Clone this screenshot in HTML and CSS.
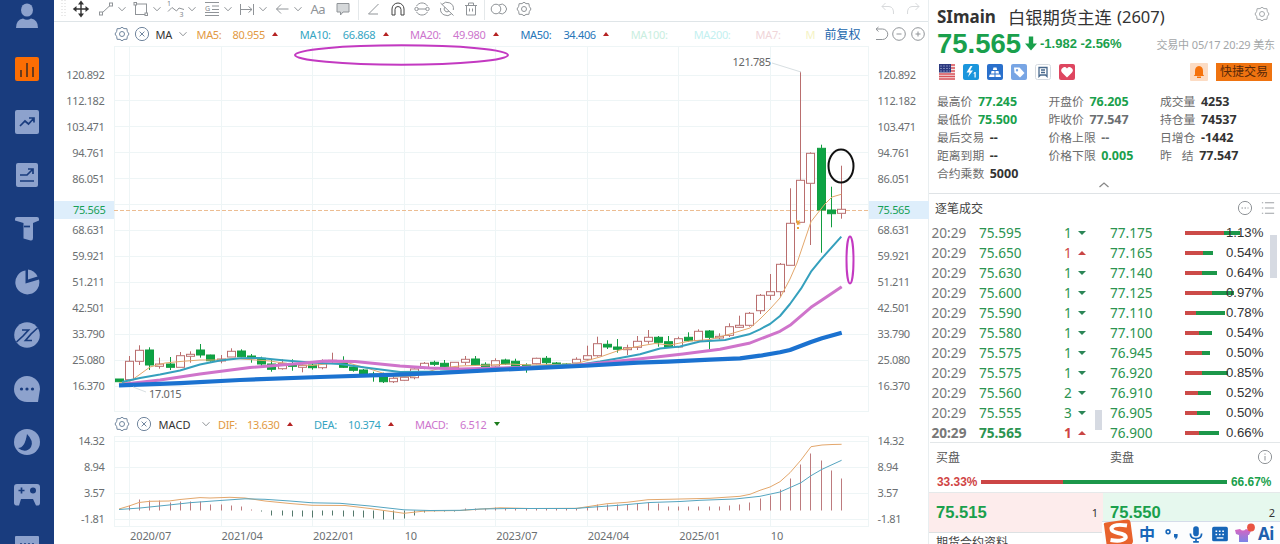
FILE: index.html
```html
<!DOCTYPE html>
<html lang="zh-CN">
<head>
  <meta charset="UTF-8">
  <title>SImain 白银期货主连</title>
  <link rel="stylesheet" href="styles.css">
</head>
<body>
  <svg class="defs" width="0" height="0">
    <symbol id="gear" viewBox="0 0 16 16"><path d="M8 1.2 L10 2.6 L12.9 2.7 L13.3 5.4 L15 8 L13.3 10.6 L12.9 13.3 L10 13.4 L8 14.8 L6 13.4 L3.1 13.3 L2.7 10.6 L1 8 L2.7 5.4 L3.1 2.7 L6 2.6 Z" stroke-linejoin="round"/><circle cx="8" cy="8" r="2.5"/></symbol>
    <symbol id="chev" viewBox="0 0 12 12"><path d="M2.5 4.2 L6 7.8 L9.5 4.2"/></symbol>
    <symbol id="closeX" viewBox="0 0 16 16"><circle cx="8" cy="8" r="6.6"/><path d="M5.6 5.6 L10.4 10.4 M10.4 5.6 L5.6 10.4"/></symbol>
  </svg>
  <div class="app">
    <nav class="sidebar">
      <svg viewBox="0 0 26 26"><ellipse cx="13" cy="7" rx="6" ry="6.6"/><path d="M2 25 Q2 16.5 9 15.5 Q13 18 17 15.5 Q24 16.5 24 25 Z"/></svg>
      <svg viewBox="0 0 26 26"><rect class="hot" x="1" y="1" width="24" height="24" rx="2"/><path class="cut" d="M7 21 V14 M13 21 V7 M19 21 V11"/></svg>
      <svg viewBox="0 0 26 26"><rect x="1" y="1" width="24" height="24" rx="2"/><path class="cut" d="M6 17 L11 12 L14.5 15 L20 9 M15 9 H20 V13.5"/></svg>
      <svg viewBox="0 0 26 26"><rect x="2" y="1" width="22" height="24" rx="2"/><path class="cut" d="M6 13 H13 L19 7 M14 7 H19 V12 M6 19 H20"/></svg>
      <svg viewBox="0 0 26 26"><path d="M3 1 H23 Q25 1 25 3 V4.5 L19 7 V22 Q19 25 16.5 24.5 L9.5 22.5 V7 L1 4.5 V3 Q1 1 3 1 Z"/><path class="cut" d="M10 10.5 H16"/></svg>
      <svg viewBox="0 0 26 26"><path d="M11.5 1.5 A12 12 0 1 0 25 10.5 L11.5 14.5 Z"/><path d="M14 0.5 A12 12 0 0 1 23.5 7.5 L14 10.5 Z"/></svg>
      <svg viewBox="0 0 26 26"><circle cx="13" cy="13" r="12.8"/><path class="cut" d="M2.5 20 L9 14 L14.5 8 H8 M23.5 6 L17 12 L11.500 18.500 H18"/></svg>
      <svg viewBox="0 0 26 26"><path d="M13 0 A13 13 0 0 1 26 13 L24 26 H13 A13 13 0 0 1 13 0 Z"/><g class="dot"><circle cx="7.5" cy="13" r="1.6"/><circle cx="13" cy="13" r="1.6"/><circle cx="18.5" cy="13" r="1.6"/></g></svg>
      <svg viewBox="0 0 26 26"><circle cx="13" cy="13" r="13"/><path class="dot" d="M13 5 Q20 12 17 18 Q12 25 4 19 Q11 19 13 5 Z"/></svg>
      <svg viewBox="0 0 26 26"><path d="M3 2 H23 Q26 2 26 5 V21 Q26 24 22 23.5 L19 17 H7 L5 23.5 Q0 24 0 21 V5 Q0 2 3 2 Z"/><path class="cut" d="M4.5 8.5 H10.5 M7.5 5.5 V11.5"/><circle class="dot" cx="19" cy="8.5" r="3"/></svg>
      <svg viewBox="0 0 26 26"><rect x="1" y="0" width="24" height="26" rx="1"/><path class="cut" d="M6 8 H20" stroke-dasharray="2 2"/></svg>
    </nav>

    <main class="chart-area">
      <div class="toolbar">
        <svg class="ic grip" viewBox="0 0 8 20"><path d="M2 1 V18 M5 1 V18" stroke-dasharray="1 2"/></svg>
        <svg class="ic move" viewBox="0 0 20 20"><path d="M10 3 V17 M3 10 H17"/><path class="solid" d="M10 1.5 L13 5.5 H7 Z M10 18.5 L7 14.5 H13 Z M1.8 10 L5.5 7 V13 Z M18.2 10 L14.5 7 V13 Z"/></svg>
        <div class="tool"><svg class="ic" viewBox="0 0 20 20"><path d="M6 14 L14 6.5"/><rect x="3.5" y="13" width="3" height="3"/><rect x="13.5" y="4" width="3" height="3"/></svg><svg class="ic chev"><use href="#chev"/></svg></div>
        <div class="tool"><svg class="ic" viewBox="0 0 20 20"><rect x="4.5" y="5" width="11" height="10.5"/><g class="white"><rect x="3" y="3.5" width="2.5" height="2.5"/><rect x="14" y="14" width="2.5" height="2.5"/></g></svg><svg class="ic chev"><use href="#chev"/></svg></div>
        <div class="tool"><svg class="ic" viewBox="0 0 20 20"><path d="M2 12.5 L6 8.5 L10.5 12 L13 9 L18 10.5"/><text x="1" y="7">1</text><text x="13.5" y="18">3</text></svg><svg class="ic chev"><use href="#chev"/></svg></div>
        <div class="tool"><svg class="ic" viewBox="0 0 20 20"><path d="M3 3.5 H17 M10 7 H17 M10 10.5 H17 M3 13.5 H17 M3 16.5 H17"/><text x="3" y="11.5">G</text></svg><svg class="ic chev"><use href="#chev"/></svg></div>
        <div class="tool"><svg class="ic" viewBox="0 0 20 20"><path d="M3.5 5 V16 M16.5 5 V16 M3.5 10.5 H15 M11.5 7.5 L15 10.5 L11.5 13.5"/></svg><svg class="ic chev"><use href="#chev"/></svg></div>
        <div class="tool"><svg class="ic" viewBox="0 0 20 20"><path d="M4.5 10 H16.5 M9 5.5 L4.5 10 L9 14.5"/></svg><svg class="ic chev"><use href="#chev"/></svg></div>
        <span class="aa">Aa</span>
        <svg class="ic note" viewBox="0 0 20 20"><path class="fill" d="M4 4.5 H16 V13 H10 L7.5 16 V13 H4 Z"/></svg>
        <i class="sep"></i>
        <svg class="ic single" viewBox="0 0 20 20"><path d="M15.5 5 L5.5 15 H15"/></svg>
        <svg class="ic single dark" viewBox="0 0 20 20"><path d="M4 16 V10 A6 6 0 0 1 16 10 V16 H13 V10.5 A3 3 0 0 0 7 10.5 V16 Z"/></svg>
        <svg class="ic single" viewBox="0 0 20 20"><path d="M4.5 7 A6.5 6.5 0 0 1 15.5 7 M4.5 13 A6.5 6.5 0 0 0 15.5 13 M6 10 H14"/><circle cx="4.5" cy="10" r="1.7"/><circle cx="15.5" cy="10" r="1.7"/></svg>
        <svg class="ic single" viewBox="0 0 20 20"><path d="M5 5.5 A6.5 6.5 0 0 1 16.3 11 M14.5 14.8 A6.5 6.5 0 0 1 3.6 9 M3.5 4 L16.5 16.5 M8 8 A2.8 2.8 0 0 0 12 12"/></svg>
        <svg class="ic single" viewBox="0 0 20 20"><path d="M4 6.5 H16 M7.5 6.5 V4 H12.5 V6.5 M5.5 6.5 V16 H14.5 V6.5 M8.5 9.5 V12.5 M11.5 9.5 V12.5"/></svg>
        <i class="sep"></i>
        <svg class="ic single" viewBox="0 0 20 20"><circle cx="7" cy="10" r="4.8"/><path d="M10 6 A4.8 4.8 0 1 1 10 14"/></svg>
        <svg class="ic gear"><use href="#gear"/></svg>
        <span class="push"></span>
        <svg class="ic faint" viewBox="0 0 20 20"><path d="M7.5 4 L4 7.5 L7.5 11 M4 7.5 H11 Q16 8 15.5 15"/></svg>
        <svg class="ic faint" viewBox="0 0 20 20"><path d="M12.5 4 L16 7.5 L12.5 11 M16 7.5 H9 Q4 8 4.5 15"/></svg>
      </div>

      <div class="indicators ma-row">
        <svg class="ic g16"><use href="#gear"/></svg>
        <svg class="ic g16"><use href="#closeX"/></svg>
        <span class="ind-name">MA</span>
        <svg class="ic chev"><use href="#chev"/></svg>
        <div class="ma-item ma5 first"><span>MA5:</span><b>80.955</b><i class="up"></i></div>
        <div class="ma-item ma10"><span>MA10:</span><b>66.868</b><i class="up"></i></div>
        <div class="ma-item ma20"><span>MA20:</span><b>49.980</b><i class="up"></i></div>
        <div class="ma-item ma50"><span>MA50:</span><b>34.406</b><i class="up"></i></div>
        <span class="off100">MA100:</span><span class="off200">MA200:</span><span class="off7">MA7:</span><span class="offx">M</span>
        <span class="adj">前复权</span>
        <svg class="ic zoomer" viewBox="0 0 16 16"><path d="M3 3 H9.5 A5 5 0 0 1 9.5 13.5 H3 M5.5 1 L3 3.2 L5.5 5.5"/></svg>
        <svg class="ic zoomer" viewBox="0 0 16 16"><circle cx="8" cy="8" r="6.3"/><path d="M5.5 8 H10.5"/></svg>
        <svg class="ic zoomer" viewBox="0 0 16 16"><circle cx="8" cy="8" r="6.3"/><path d="M5.5 8 H10.5 M8 5.5 V10.5"/></svg>
      </div>

      <div class="plot price">
        <div class="axis left"></div>
        <svg id="priceChart" viewBox="114 46 755 366"></svg>
        <div class="axis right"></div>
        <div class="tag tag-left">75.565</div>
        <div class="tag tag-right">75.565</div>
      </div>

      <div class="indicators macd-row">
        <svg class="ic g16"><use href="#gear"/></svg>
        <svg class="ic g16"><use href="#closeX"/></svg>
        <span class="ind-name">MACD</span>
        <svg class="ic chev"><use href="#chev"/></svg>
        <div class="macd-item ma5"><span>DIF:</span><b>13.630</b><i class="up"></i></div>
        <div class="macd-item ma10 dea"><span>DEA:</span><b>10.374</b><i class="up"></i></div>
        <div class="macd-item ma20 hist"><span>MACD:</span><b>6.512</b><i class="down"></i></div>
      </div>

      <div class="plot macd">
        <div class="axis left"><span>14.32</span><span>8.94</span><span>3.57</span><span>-1.81</span></div>
        <svg id="macdChart" viewBox="114 436 755 91"></svg>
        <div class="axis right"><span>14.32</span><span>8.94</span><span>3.57</span><span>-1.81</span></div>
      </div>
      <div class="dates"><span>2020/07</span><span>2021/04</span><span>2022/01</span><span>10</span><span>2023/07</span><span>2024/04</span><span>2025/01</span><span>10</span></div>
    </main>

    <aside class="quote">
      <div class="title"><b>SImain</b><span class="name">白银期货主连</span><span class="code">(2607)</span><svg class="ic g16"><use href="#gear"/></svg></div>
      <div class="last">
        <strong>75.565</strong>
        <svg class="drop" viewBox="0 0 12 16"><path d="M3.8 1 H8.2 V8 H12 L6 15 L0 8 H3.8 Z"/></svg>
        <span class="chg">-1.982 -2.56%</span>
        <span class="time">交易中 05/17 20:29 美东</span>
      </div>
      <div class="badges">
        <svg viewBox="0 0 16 16"><rect width="16" height="16" rx="2" fill="#f4e4e4"/><path d="M8 1 H16 M8 4 H16 M8 7 H16 M0 10 H16 M0 12.5 H16 M0 15 H16" stroke="#d9525a" stroke-width="1.4"/><rect width="12" height="8.500" fill="#2c3a80"/><path d="M1.5 2 H11 M1.5 4.5 H11 M1.5 7 H11" stroke="#ccd3ee" stroke-dasharray="1 2"/></svg>
        <svg viewBox="0 0 16 16"><rect width="16" height="16" rx="2" fill="#1b96dc"/><path d="M7.5 2 L3.5 8.5 H6.5 L5 13 L10 6.5 H7 L9.5 2 Z M11.5 8 H12.7 V13.5 H11.5 V9.5 L10.3 10 Z" fill="#fff"/></svg>
        <svg viewBox="0 0 16 16"><rect width="16" height="16" rx="2" fill="#2a70cc"/><path d="M6.5 3.5 H9.5 L10.2 6 H5.8 Z M4.5 7 H7.5 V9.5 H4 Z M8.5 7 H11.5 L12 9.5 H8.5 Z M2.8 10.5 H7.5 V13 H2 Z M8.5 10.5 H13.2 L14 13 H8.5 Z" fill="#fff"/></svg>
        <svg viewBox="0 0 16 16"><rect width="16" height="16" rx="2" fill="#78a5e4"/><path d="M3 3.5 L8.5 3.5 L13.5 9 L9 13.5 L3.5 8.5 Z" fill="#fff"/><circle cx="6" cy="6.3" r="1.2" fill="#78a5e4"/></svg>
        <svg viewBox="0 0 16 16"><rect x=".5" y=".5" width="15" height="15" rx="2" fill="#fff" stroke="#d5dae0"/><path d="M4 3.5 H12 V12.5 L10.5 11 H5.500 L4 12.5 Z M6 6 H10 M6 8.5 H10" fill="none" stroke="#48688c" stroke-width="1.3"/></svg>
        <svg viewBox="0 0 16 16"><rect width="16" height="16" rx="2" fill="#de4660"/><path d="M8 13.5 L3 8.5 A3 3 0 0 1 8 4.5 A3 3 0 0 1 13 8.5 Z" fill="#fff"/></svg>
        <svg class="bell" viewBox="0 0 18 18"><rect width="18" height="18" rx="1" fill="#fcdcc4"/><path d="M9 3 Q13 3.5 13 8 V11.5 L14.2 13 H3.8 L5 11.5 V8 Q5 3.5 9 3 Z M7 13.5 H11 V15 H7 Z" fill="#f5720c"/></svg>
        <span class="fast">快捷交易</span>
      </div>
      <div class="stats">
        <div><p>最高价<b class="grn">77.245</b></p><p>最低价<b class="grn">75.500</b></p><p>最后交易<b>--</b></p><p>距离到期<b>--</b></p><p>合约乘数<b>5000</b></p></div>
        <div><p>开盘价<b class="grn">76.205</b></p><p>昨收价<b class="gry">77.547</b></p><p>价格上限<b class="gry">--</b></p><p>价格下限<b class="grn">0.005</b></p></div>
        <div><p>成交量<b>4253</b></p><p>持仓量<b>74537</b></p><p>日增仓<b>-1442</b></p><p><span class="wide">昨</span>结<b>77.547</b></p></div>
      </div>
      <div class="fold"><svg viewBox="0 0 12 8"><path d="M1.5 6 L6 2 L10.5 6"/></svg></div>
      <div class="tick-head">逐笔成交
        <svg class="ic more" viewBox="0 0 16 16"><circle cx="8" cy="8" r="6.6"/><path d="M4.5 8 H11.5" stroke-dasharray="1.5 1.5"/></svg>
        <svg class="ic list" viewBox="0 0 16 16"><path d="M1 2 H2.5 M4.5 2 H15 M1 8 H2.5 M4.5 8 H15 M1 14 H2.5 M4.5 14 H15"/></svg>
      </div>
      <div class="ticks">
        <div id="trades"></div>
        <div id="levels"></div>
        <i class="thumb thumb-a"></i><i class="thumb thumb-b"></i>
      </div>
      <div class="sides"><span>买盘</span><span>卖盘</span><svg class="ic info" viewBox="0 0 16 16"><circle cx="8" cy="8" r="6.6"/><path d="M8 7 V11.5 M8 4.5 V5.7"/></svg></div>
      <div class="ratio"><b class="red">33.33%</b><i class="buy"></i><i class="sell"></i><b class="grn">66.67%</b></div>
      <div class="book"><div class="bid"><b>75.515</b><span>1</span></div><div class="ask"><b>75.550</b><span>2</span></div></div>
      <div class="next">期货合约资料</div>
    </aside>

    <div class="ime">
      <svg class="logo" viewBox="0 0 32 28"><path d="M2 6 Q1 4 4 3.5 L25 0.5 Q28 0 28.5 3 L31 22 Q31 25 28 26 L12 28 H7 Q5 28 4.5 25 Z" fill="#e8622c"/><path d="M25 6.500 Q12 4.500 9.5 9 Q9 12.500 16 14 Q25 15.500 23.500 19 Q20 23 8.500 21" fill="none" stroke="#fff" stroke-width="4"/></svg>
      <span class="zh">中</span>
      <svg viewBox="0 0 16 16"><circle cx="4.5" cy="6" r="1.7" fill="none" stroke="#1766b8" stroke-width="1.4"/><path d="M9.8 8 H13 Q13.5 12 10.5 13 Q11.5 11.5 11 11 H9.8 Z" fill="#1766b8"/></svg>
      <svg viewBox="0 0 16 16"><rect x="5.5" y="1" width="5" height="9" rx="2.5" fill="#1766b8"/><path d="M3 7.5 Q3 12 8 12 Q13 12 13 7.5 M8 12 V15 M5.5 15 H10.5" fill="none" stroke="#1766b8" stroke-width="1.5"/></svg>
      <svg viewBox="0 0 16 16"><rect x="1" y="1.5" width="14" height="13" rx="1.5" fill="#1766b8"/><path d="M4 5.5 H12.5 M4 8.5 H12.5" stroke="#fff" stroke-width="1.3" stroke-dasharray="1.5 1.5"/><path d="M5 11.5 H11" stroke="#fff" stroke-width="1.2"/></svg>
      <svg class="skin" viewBox="0 0 20 20"><defs><linearGradient id="skinFill" x2="0" y2="1"><stop offset="0" stop-color="#d964c0"/><stop offset="1" stop-color="#7b83e8"/></linearGradient></defs><path d="M5 6 Q8 9 11 6 L16 8 L14 12 H13 V19 H4 V12 L1 11 L0 7 Z" fill="url(#skinFill)"/><circle cx="16" cy="4.5" r="3.9" fill="#e95443"/></svg>
      <b class="ai">Ai</b>
    </div>
  </div>
  <script src="chart.js"></script>
</body>
</html>
```

FILE: styles.css
```css
* { box-sizing: border-box; }
body {
  margin: 0;
  width: 1280px;
  height: 544px;
  overflow: hidden;
  background: #fff;
  font-family: "Noto Sans", "Noto Sans CJK SC", sans-serif;
  font-size: 11px;
  color: #444;
}
.defs { position: absolute; }
.app { position: relative; display: flex; height: 544px; overflow: hidden; }
svg { flex-shrink: 0; display: block; }
p { margin: 0; }
i { font-style: normal; }
.ic { fill: none; stroke: #909498; stroke-width: 1; }
.chev { width: 12px; height: 12px; }

/* sidebar */
.sidebar {
  width: 54px;
  flex-shrink: 0;
  background: #193c7e;
  display: flex;
  flex-direction: column;
  align-items: center;
  gap: 27.3px;
  padding-top: 2.6px;
  overflow: hidden;
}
.sidebar svg { width: 26px; height: 26px; fill: #8da2cd; }
.sidebar .hot { fill: #fb6d03; }
.sidebar .cut { fill: none; stroke: #193c7e; stroke-width: 1.7; }
.sidebar .hot + .cut { stroke: #54341f; }
.sidebar .dot { fill: #193c7e; }

/* chart side */
.chart-area { width: 875px; flex-shrink: 0; display: flex; flex-direction: column; border-right: 1px solid #e9eef0; }
.toolbar {
  height: 22px;
  flex-shrink: 0;
  display: flex;
  align-items: center;
  padding-bottom: 4px;
  border-bottom: 1px solid #dfe5e8;
}
.toolbar > .ic, .toolbar .tool .ic:first-child { width: 20px; height: 20px; }
.toolbar text { font-size: 7px; fill: #808488; stroke: none; }
.toolbar .grip { width: 8px; margin: 0 3px 0 6px; stroke: #d5d5d5; }
.toolbar .move { stroke: #333; stroke-width: 1.4; margin-right: 4.5px; }
.toolbar .solid { fill: #333; stroke: none; }
.toolbar .white { fill: #fff; }
.toolbar .fill { fill: #d5d8da; }
.toolbar .dark { stroke: #444; }
.tool { display: flex; align-items: center; width: 35.4px; }
.aa { width: 20px; text-align: center; font-size: 13px; color: #909498; letter-spacing: -0.5px; }
.toolbar .note { margin: 0 5px; }
.sep { width: 1px; height: 22px; background: #e4e8ea; }
.toolbar .single { margin: 0 2.25px; }
.toolbar .sep + .single { margin-left: 4.5px; }
.toolbar .gear { width: 16px; height: 16px; margin-left: 5px; }
.push { flex: 1; }
.toolbar .faint { stroke: #d8dadc; margin-right: 5px; }

.indicators { display: flex; align-items: center; letter-spacing: -0.33px; white-space: nowrap; }
.indicators b { font-weight: normal; }
.g16 { width: 16px; height: 16px; stroke: #71869e; }
.ma-row { height: 24px; padding-left: 59.5px; }
.ma-row .g16 + .g16 { margin-left: 4px; }
.ma-row .ind-name { margin-left: 6px; width: 22px; color: #333; }
.ma-row .chev { margin-left: -0.5px; }
.up, .down { border: 3px solid transparent; border-top: 0; border-bottom: 4px solid #b52222; width: 0; }
.down { border-bottom: 0; border-top: 4px solid #1c7c1c; }
.ma-item { display: flex; align-items: center; width: 110.3px; flex-shrink: 0; }
.ma-item span { width: 43px; }
.ma-item b { width: 40px; }
.ma-item.first { width: 103.3px; margin-left: 7.5px; }
.ma-item.first span { width: 36px; }
.ma5 { color: #e29a43; }
.ma10 { color: #35a5c2; }
.ma20 { color: #cd75cd; }
.ma50 { color: #2776b9; }
.off100 { width: 63px; color: #c9eee0; }
.off200 { width: 62px; color: #c3f0f0; }
.off7 { width: 50px; color: #f0d5d9; }
.offx { width: 19px; color: #f5f3c4; }
.adj { width: 48px; font-size: 12px; color: #2267ad; letter-spacing: 0; }
.zoomer { width: 16px; height: 16px; margin-right: 2.5px; }

.plot { position: relative; display: flex; flex-shrink: 0; }
.plot.price { height: 366px; }
.plot > svg { width: 755px; height: 100%; overflow: visible; }
.axis { display: flex; flex-direction: column; width: 60px; letter-spacing: -0.35px; color: #6b6f72; }
.axis.left { text-align: right; padding-right: 9px; }
.axis.right { padding-left: 9px; }
.price .axis { padding-top: 16px; }
.price .axis span { height: 25.92px; line-height: 26px; flex-shrink: 0; }
.tag {
  position: absolute;
  top: 155px;
  width: 60px;
  height: 18px;
  line-height: 18px;
  background: #deeefb;
  color: #18a058;
  letter-spacing: -0.3px;
}
.tag-left { left: 0; text-align: right; padding-right: 8.5px; }
.tag-right { left: 815px; padding-left: 8.5px; }

.macd-row { height: 24px; padding-left: 59.5px; }
.macd-row .g16 + .g16 { margin-left: 6px; }
.macd-row .ind-name { margin-left: 7px; width: 41px; color: #333; letter-spacing: 0.1px; }
.macd-item { display: flex; align-items: center; width: 96px; margin-left: 6.5px; }
.macd-item span { width: 29px; }
.macd-item b { width: 39.5px; }
.macd-item.dea { margin-left: 0; width: 101px; }
.macd-item.dea span { width: 34px; }
.macd-item.dea b { width: 40px; }
.macd-item.hist { margin-left: 0; }
.macd-item.hist span { width: 45px; }
.macd-item.hist b { width: 33.5px; }
.plot.macd { height: 91px; }
.macd .axis { margin-top: -8px; }
.macd .axis span { height: 26px; line-height: 26px; flex-shrink: 0; }
.dates { display: flex; padding-left: 76px; height: 17px; line-height: 18px; color: #6b6f72; letter-spacing: -0.1px; }
.dates span { width: 91.55px; flex-shrink: 0; }

/* chart drawing */
.grid { stroke: #eef5f6; stroke-width: 1; fill: none; }
.now { stroke: #ecbd92; stroke-dasharray: 4 2; }
.up-c { stroke: #b96e6e; fill: #fff; }
.dn-c { stroke: #129c40; fill: #0da344; }
.line5 { stroke: #e3a76c; stroke-width: 1; }
.line10 { stroke: #35a0bd; stroke-width: 2; }
.line20 { stroke: #cf74cb; stroke-width: 3; }
.line50 { stroke: #1b72d0; stroke-width: 4.2; }
.dea-line { stroke: #55a5c0; stroke-width: 1; }
.line5, .line10, .line20, .line50, .dea-line { fill: none; stroke-linejoin: round; }
.bar-up { stroke: #bd7b7e; }
.bar-dn { stroke: #54796c; }
.mark { font-size: 11px; fill: #666; letter-spacing: -0.35px; }
.leader { stroke: #d8dfe2; }
.ring { fill: none; stroke: #c339c1; stroke-width: 2; }
.ring.black { stroke: #111; }
.spark { fill: #e9a33c; }

/* quote side */
.quote { width: 351px; flex-shrink: 0; padding-left: 1px; }
.grn { color: #1aa04c !important; }
.red { color: #d04444; }
.gry { color: #6b6f72 !important; }
.title { display: flex; align-items: center; height: 30px; padding: 3px 10px 0 7px; color: #333; }
.title b { font-size: 17px; width: 71px; }
.title .name { font-size: 17.3px; width: 109px; white-space: nowrap; }
.title .code { font-size: 16.5px; }
.title .g16 { margin-left: auto; margin-top: -5px; stroke: #a5a9ac; }
.last { display: flex; align-items: center; height: 27px; padding: 0 5px 0 7px; color: #1aa04c; }
.last strong { font: bold 27.5px/27px "Liberation Sans", sans-serif; width: 88px; }
.drop { width: 12px; height: 17px; fill: #1aa04c; margin: 0 3px 0 0; }
.chg { font: bold 13px "Liberation Sans", sans-serif; white-space: nowrap; }
.time { margin-left: auto; color: #a3a6a8; white-space: nowrap; letter-spacing: -0.13px; }
.badges { display: flex; align-items: center; gap: 8px; height: 30px; padding: 0 8px 0 9px; }
.badges svg { width: 16px; height: 16px; }
.badges .bell { width: 18px; height: 18px; margin-left: auto; }
.fast { width: 56px; height: 18px; line-height: 17px; background: #ef7310; color: #5b2a08; font-size: 12px; text-align: center; }
.stats { display: flex; padding: 5px 0 0 7px; height: 94px; color: #6c6c6c; font-size: 11.8px; }
.stats > div { width: 111.5px; flex-shrink: 0; }
.stats p { height: 18px; line-height: 18px; white-space: nowrap; }
.stats b { margin-left: 5.5px; font-size: 12.5px; color: #333; }
.stats .wide { margin-right: 10px; }
.fold { height: 13px; margin-left: -1px; border-bottom: 1px solid #dfe3e6; }
.fold svg { width: 12px; height: 8px; margin-left: 169px; fill: none; stroke: #888; stroke-width: 1.3; }
.tick-head { display: flex; align-items: center; height: 28px; padding: 0 4px 0 5px; color: #444; font-size: 12px; }
.tick-head .more { width: 16px; height: 16px; margin-left: auto; }
.tick-head .list { width: 16px; height: 14px; margin-left: 7px; }
.ticks { position: relative; display: flex; height: 221px; border-bottom: 1px solid #e3e7e9; padding-top: 0.5px; }
#trades { width: 174px; }
#levels { flex: 1; }
.trade, .level { display: flex; align-items: center; height: 20px; font-size: 13.6px; line-height: 20px; color: #2b9450; }
.trade .at { width: 49px; padding-left: 1.5px; color: #777; }
.trade .px { width: 85px; }
.trade .qty { width: 14px; }
.trade.last-row { font-weight: bold; }
.trade .up { border-width: 0 4px 4px; border-color: transparent transparent #c94444; }
.trade .down { border-width: 4px 4px 0; border-color: #2b8656 transparent transparent; }
.trade .up-qty { color: #d04444; }
.level .px { width: 81px; padding-left: 6px; }
.level .bars { width: 41px; height: 4px; display: flex; }
.bars i { height: 4px; flex-shrink: 0; }
.bars .r { background: #cc4b48; }
.bars .g { background: #1c974a; }
.level .pct { font: 13.2px "Liberation Sans", sans-serif; color: #333; position: relative; }
.thumb { position: absolute; background: #d6dae2; }
.thumb-a { left: 165px; top: 188px; width: 7px; height: 20px; }
.thumb-b { left: 340px; top: 13px; width: 7px; height: 43px; }
.sides { display: flex; align-items: center; height: 28px; padding: 0 7px 0 6px; font-size: 12px; color: #555; }
.sides span { width: 174px; }
.sides span + span { width: 60px; }
.sides .info { width: 16px; height: 16px; margin-left: auto; }
.ratio { display: flex; align-items: center; height: 21px; padding-left: 7px; font: bold 11.9px "Liberation Sans", sans-serif; }
.ratio b { width: 44px; }
.ratio i { height: 4px; }
.ratio .buy { width: 82px; background: #cc4545; }
.ratio .sell { width: 164px; background: #1c974a; margin-right: 4px; }
.book { display: flex; height: 41px; margin-left: -1px; border-top: 1px solid #e5e9ea; border-bottom: 1px solid #dde1e3; }
.book > div { display: flex; align-items: center; justify-content: space-between; padding: 0 5px 0 7px; font-size: 11px; color: #333; }
.book b { font: bold 16.6px "Liberation Sans", sans-serif; color: #1aa04c; }
.bid { width: 174px; background: #fdecec; }
.ask { width: 177px; background: #e6f8ee; }
.next { padding-left: 6px; font-size: 12px; line-height: 20px; }

/* floating input method bar */
.ime {
  position: absolute;
  left: 1102px;
  top: 521px;
  width: 178px;
  height: 26px;
  display: flex;
  align-items: center;
  background: #fcfdfe;
  border-top: 1px solid #d5dcea;
}
.ime svg { width: 18px; height: 18px; margin: -2px 6px 0 0; }
.ime .logo { width: 32px; height: 28px; margin: -4px 5px 0 0; }
.ime .zh { font-size: 16px; font-weight: bold; line-height: 24px; margin-top: -2px; color: #1766b8; width: 24px; }
.ime .skin { width: 20px; height: 20px; margin: -4px 3px 0 0; }
.ime .ai { font-size: 17px; line-height: 24px; margin-top: -2px; color: #1d5fae; letter-spacing: -0.5px; }
```

FILE: chart.js
```js
const STEP = 10.17;
const X0 = 119.3;

// type, high, body top, body bottom, low
const candles = [
  ['g',379,379,381.7,381.7],['r',356,361.3,379.7,379.7],['r',345.3,350.3,361.3,365],['g',347.3,350,365,370],
  ['r',357.7,364,366.3,368.7],['g',357,364,367.3,370],['r',352,355.7,367.3,367.3],['r',351.3,354.3,356.3,362.7],
  ['g',344,350,355,357.7],['g',354.7,355,360.7,361.7],['r',355,359,361,363.3],['r',348.3,351.3,357,357],
  ['g',349.3,351,356.7,357.3],['g',354,356,357.3,362.7],['g',356.7,358.3,364,366.3],['g',359.3,364,369.3,371.7],
  ['r',359.3,363.3,368.7,369.7],['g',359.3,364.7,366.3,370.7],['r',363.3,365.3,367.3,372.3],['g',363.3,365,367.7,369.7],
  ['r',359.3,363.7,367.7,369.3],['r',352.7,360.3,361.3,363.3],['g',356.3,360.7,367.3,368],['g',364.7,367,370.3,371.7],
  ['g',369,370,374,374.7],['g',371.7,374,375.3,381.7],['g',372.7,376.7,381.7,383],['r',376,378.3,381.7,383],
  ['r',375.3,377.3,380.3,381],['r',368.3,369,377.7,379.3],['r',362,363.3,368.3,369.3],['g',360.7,362.3,364.3,366],
  ['g',360,363.3,366.7,368.3],['r',362,362.3,367.7,368.7],['r',356,359.3,362.3,365],['g',356,359,364.7,365.7],
  ['g',362.3,364.3,366.7,367.7],['r',358.3,360.7,366,366.7],['g',358.7,360,364,365],['g',358.7,361.3,366.7,368.3],
  ['g',363.3,365,367.3,372.7],['r',357.7,358.3,363.7,364.3],['g',356,358.3,362.7,366],['g',362,363,364.3,366],
  ['g',363.3,364,365.3,366.7],['r',357.3,359.3,363,363.3],['r',345.7,355.7,359.3,360],['r',336.7,343.7,355.7,356.7],
  ['g',340.3,344.3,347,349],['g',339,347,349.3,352.7],['r',344.7,347.7,349.7,355],['r',336,341.3,347.3,350],
  ['r',330,337.3,341.3,343.7],['g',336,337.3,342.3,346.7],['g',336,341.7,347,347.7],['r',336.7,338.7,347,348],
  ['g',332.3,337.3,340.7,341.7],['r',329.3,331.3,340.7,340.7],['g',330,331,337.3,349.3],['r',333.3,336.3,338,339.3],
  ['r',323.3,326.7,335.3,337],['r',315.7,325.3,327.3,328],['r',312,313.3,325.3,326.7],['r',294,295.3,310.7,314],
  ['r',274,291.7,295.3,300],['r',263,264.3,291.7,296.7],['r',188.3,223.3,265.3,265.3],['r',71.7,180.3,222.3,222.3],
  ['r',152.3,153.3,183.3,245],['g',144.7,148.3,210,252.7],['g',186.7,210,213.7,227.3],['r',165.7,209.3,213.3,218.7]
];

const lines = {
  line5: '119,383 129,382 139,375 150,367 165,363 180,361.5 200,360 215,360 235,358.5 270,361 290,364 312,365.5 345,362 370,369 395,377 415,376 440,368 460,366 490,365 510,364 530,365 575,364 600,357 620,350 640,346 655,343.5 670,345 690,341 710,339.5 730,334 750,328 760,319 770,309 780,298 790,279 797,263 811,221.7 817,214 825,204 832,197 841.3,194.3',
  line10: '122,382 140,378 160,374.5 180,370.5 200,364.5 220,360.5 240,358.3 260,358 280,360 310,362.5 340,364 365,367.5 400,372 440,371.5 480,370 510,367.5 580,364.5 600,361.5 620,358 640,354.3 660,348.5 680,346.5 700,341.5 725,340 749,334.3 760,329.3 770,324 780,316 790,304 801,288.7 811,271.7 821,259.3 841.3,236.7',
  line20: '125,384 160,380 200,374 250,367.5 300,363.5 325,361 355,361.5 380,364 400,366 430,368 460,369 500,368 560,367 600,363 643,358.5 683,354 720,349.3 749,343.3 780,331.3 790,325.3 811,307.3 822,300 841.7,286.7',
  line50: '119,385.3 180,383.2 240,380 320,377 404,374.3 440,373 500,369.7 590,365.5 638,362.7 668,361.7 710,359.7 740,358.3 760,355.7 780,352.3 790,350 811,342 822,338.3 841.7,332.7'
};

const hist = [0,5,11,10,10,8,9,9,9,6,6,5,4,1,-1,-5,-5,-6,-6,-7,-5,-5,-6,-6,-7,-8,-9,-9,-8,-5,-2,-1,-1,-1,2,2,2,3,2,2,2,2,2,2,2,2,4,6,6,6,6,7,8,7,4,4,4,4,4,4,5,6,8,12,15,21,32,46,57,50,40,32];
const dif = '119,509 129,506 139,502.5 150,501.3 169,501 180,499.5 200,497.6 210,498 230,497.3 245,498 265,501 290,503.5 312,505.3 345,505.5 370,508.5 404,513.3 425,511 460,510.5 500,507.8 530,508.5 577,508.3 607,503.7 627,502.3 648,499.7 668,499.3 710,498.3 740,496.3 750,494.3 760,490.3 770,487 780,481.7 790,472.7 801,460 811,446.7 822,445 832,444.5 841.6,444.3';
const dea = '119,509.5 140,508 169,505 190,502.7 220,500.5 245,498.8 265,499.3 290,501 312,502.8 340,503.3 370,506 404,509.8 430,510.5 460,510.3 480,509 510,508.5 575,508.5 590,507.3 620,505.2 650,502.5 680,501.5 700,500.3 735,499 760,496.3 780,492 801,482.7 811,475.7 822,469.3 832,464.7 841.6,460.3';

const labels = ['120.892','112.182','103.471','94.761','86.051','77.341','68.631','59.921','51.211','42.501','33.790','25.080','16.370'];

function xAt(i) { return X0 + i * STEP; }

function gridLines(top, bottom, ys) {
  let s = `<rect class="grid" x="114.5" y="${top}" width="754" height="${bottom - top}"/>`;
  ys.forEach(y => { s += `<path class="grid" d="M114 ${Math.round(y) + 0.5} H868"/>`; });
  for (let i = 1; i < candles.length; i += 9) {
    s += `<path class="grid" d="M${Math.floor(xAt(i)) + 0.5} ${top} V${bottom}"/>`;
  }
  return s;
}

// price chart
let out = gridLines(46.5, 411.5, labels.map((l, i) => 74.5 + i * 25.92));
out += '<path class="now" d="M114 210.5 H868"/>';
candles.forEach((c, i) => {
  const x = Math.round(xAt(i) - 0.5) + 0.5;
  const cls = c[0] === 'r' ? 'up-c' : 'dn-c';
  out += `<path class="${cls}" d="M${x} ${c[1]} V${c[2]} M${x} ${c[3]} V${c[4]}"/>`;
  out += `<rect class="${cls}" x="${x - 4}" y="${c[2]}" width="8" height="${Math.max(c[3] - c[2], 1)}"/>`;
});
for (const key in lines) out += `<polyline class="${key}" points="${lines[key]}"/>`;
out += '<path class="leader" d="M772 63 L801 72 M133 387 L146 392"/>';
out += '<text class="mark" x="732.5" y="66">121.785</text><text class="mark" x="149" y="398">17.015</text>';
out += '<path class="spark" d="M796 219 l2 2 l2 -1 l-1 3 l2 1 l-4 1 z M797 227 h2 v2 h-2 z"/>';
out += '<ellipse class="ring" cx="401.5" cy="55" rx="106.5" ry="9.7"/>';
out += '<ellipse class="ring" cx="850" cy="260" rx="3.5" ry="23.5"/>';
out += '<ellipse class="ring black" cx="841" cy="166" rx="12.5" ry="16.5"/>';
document.getElementById('priceChart').innerHTML = out;

document.querySelectorAll('.price .axis').forEach(el => {
  el.innerHTML = labels.map(l => `<span>${l}</span>`).join('');
});

// macd chart
out = gridLines(436.5, 526.5, [441, 467, 493, 519]);
hist.forEach((h, i) => {
  if (h) out += `<path class="${h > 0 ? 'bar-up' : 'bar-dn'}" d="M${Math.round(xAt(i) - 0.5) + 0.5} 510.5 v${-h}"/>`;
});
out += `<polyline class="line5" points="${dif}"/><polyline class="dea-line" points="${dea}"/>`;
document.getElementById('macdChart').innerHTML = out;

// trades: price, quantity, direction
const trades = [
  ['75.595',1,'down'],['75.650',1,'up'],['75.630',1,'down'],['75.600',1,'down'],['75.590',1,'down'],['75.580',1,'down'],
  ['75.575',1,'down'],['75.575',1,'down'],['75.560',2,'down'],['75.555',3,'down'],['75.565',1,'up']
];
document.getElementById('trades').innerHTML = trades.map((t, i) =>
  `<div class="trade ${i === trades.length - 1 ? 'last-row' : ''}"><span class="at">20:29</span><span class="px">${t[0]}</span><span class="qty ${t[2]}-qty">${t[1]}</span><i class="${t[2]}"></i></div>`
).join('');

// levels: price, sell width, buy width, share
const levels = [
  ['77.175',39,16,'1.13%'],['77.165',17.7,10,'0.54%'],['77.140',16.7,15.3,'0.64%'],['77.125',27.3,22,'0.97%'],
  ['77.110',10.7,29.3,'0.78%'],['77.100',14,13.3,'0.54%'],['76.945',17.3,7.7,'0.50%'],['76.920',16.7,26.7,'0.85%'],
  ['76.910',12.7,13.3,'0.52%'],['76.905',12.3,12.7,'0.50%'],['76.900',14.3,19.3,'0.66%']
];
document.getElementById('levels').innerHTML = levels.map(l =>
  `<div class="level"><span class="px">${l[0]}</span><span class="bars"><i class="r" style="width:${l[1]}px"></i><i class="g" style="width:${l[2]}px"></i></span><span class="pct">${l[3]}</span></div>`
).join('');
```
